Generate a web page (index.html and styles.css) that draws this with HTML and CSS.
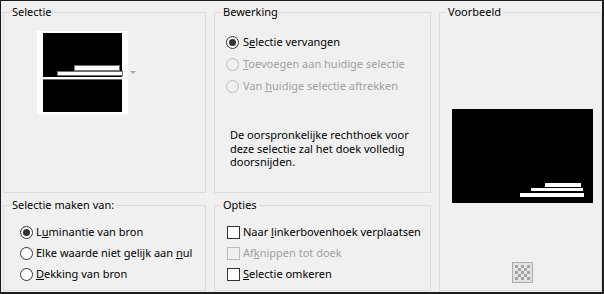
FILE: index.html
```html
<!DOCTYPE html>
<html lang="nl">
<head>
    <meta charset="UTF-8">
    <meta name="viewport" content="width=device-width, initial-scale=1.0">
    <title>Selectie uit masker</title>
    <link rel="stylesheet" href="styles.css">
</head>
<body>
    <div class="dialog">
        <fieldset class="group selectie">
            <legend>Selectie</legend>
            <div class="thumb-row">
                <svg class="thumb" width="91" height="83" viewBox="0 0 91 83">
                    <rect x="0" y="0" width="91" height="83" fill="#fff"/>
                    <rect x="6" y="2" width="79" height="79" fill="#000"/>
                    <rect x="37.5" y="34.5" width="45" height="5" fill="#fff" stroke="#707070"/>
                    <rect x="20.5" y="40.5" width="65" height="4" fill="#fff" stroke="#707070"/>
                    <rect x="6" y="46" width="79" height="2" fill="#fff"/>
                    <rect x="6" y="48" width="79" height="1" fill="#6a6a6a"/>
                </svg>
                <span class="dropdown-arrow"></span>
            </div>
        </fieldset>

        <fieldset class="group bewerking">
            <legend>Bewerking</legend>
            <div class="options">
                <label class="option"><input type="radio" name="mode" checked><span>S<u>e</u>lectie vervangen</span></label>
                <label class="option"><input type="radio" name="mode" disabled><span><u>T</u>oevoegen aan huidige selectie</span></label>
                <label class="option"><input type="radio" name="mode" disabled><span>Van <u>h</u>uidige selectie aftrekken</span></label>
            </div>
            <p class="note">De oorspronkelijke rechthoek voor<br>deze selectie zal het doek volledig<br>doorsnijden.</p>
        </fieldset>

        <fieldset class="group voorbeeld">
            <legend>Voorbeeld</legend>
            <svg class="preview" width="141" height="94" viewBox="0 0 141 94">
                <rect width="141" height="94" fill="#000"/>
                <rect x="93" y="74" width="36" height="4" fill="#fff"/>
                <rect x="79" y="79" width="52" height="3" fill="#fff"/>
                <rect x="68" y="84" width="64" height="4" fill="#fff"/>
            </svg>
            <button class="checker-btn" type="button">
                <svg width="15" height="15" viewBox="0 0 15 15">
                    <rect width="15" height="15" fill="#e6e6e6"/>
                    <path d="M0 0h3v3H0zM6 0h3v3H6zM12 0h3v3h-3zM3 3h3v3H3zM9 3h3v3H9zM0 6h3v3H0zM6 6h3v3H6zM12 6h3v3h-3zM3 9h3v3H3zM9 9h3v3H9zM0 12h3v3H0zM6 12h3v3H6zM12 12h3v3h-3z" fill="#a4a4a4"/>
                </svg>
            </button>
        </fieldset>

        <fieldset class="group bron">
            <legend>Selectie maken van:</legend>
            <div class="options tight">
                <label class="option"><input type="radio" name="bron" checked><span>L<u>u</u>minantie van bron</span></label>
                <label class="option"><input type="radio" name="bron"><span>Elke waarde niet gelijk aan <u>n</u>ul</span></label>
                <label class="option"><input type="radio" name="bron"><span><u>D</u>ekking van bron</span></label>
            </div>
        </fieldset>

        <fieldset class="group opties">
            <legend>Opties</legend>
            <div class="options tight">
                <label class="option"><input type="checkbox"><span>Naar <u>l</u>inkerbovenhoek verplaatsen</span></label>
                <label class="option"><input type="checkbox" disabled><span>Af<u>k</u>nippen tot doek</span></label>
                <label class="option"><input type="checkbox"><span><u>S</u>electie omkeren</span></label>
            </div>
        </fieldset>
    </div>
</body>
</html>
```

FILE: styles.css
```css
body {
    margin: 0;
    font-family: "Noto Sans", Arial, sans-serif;
    font-size: 11px;
    line-height: 16px;
    color: #000;
    background-color: #f0f0f0;
}
.dialog {
    width: 604px;
    height: 294px;
    box-sizing: border-box;
    border-style: solid;
    border-color: #1c1c1c;
    border-width: 1px 2px 2px 1px;
    padding: 3px 0 1px 2px;
    background-color: #f0f0f0;
    display: grid;
    grid-template-columns: 203px 217px 163px;
    grid-template-rows: 189px 94px;
    column-gap: 8px;
    row-gap: 4px;
    grid-template-areas:
        "selectie bewerking voorbeeld"
        "bron opties voorbeeld";
}
.group {
    margin: 0;
    padding: 0;
    min-width: 0;
    border: 1px solid #dcdcdc;
}
.group legend {
    margin-left: 6px;
    padding: 0 2px;
    line-height: 16px;
}
.selectie { grid-area: selectie; }
.bewerking { grid-area: bewerking; }
.voorbeeld { grid-area: voorbeeld; }
.bron { grid-area: bron; }
.opties { grid-area: opties; }

.thumb-row {
    display: flex;
    align-items: center;
    gap: 2px;
    padding: 11px 0 0 33px;
}
.thumb {
    display: block;
}
.dropdown-arrow {
    width: 0;
    height: 0;
    border-left: 3px solid transparent;
    border-right: 3px solid transparent;
    border-top: 3px solid #a8a8a8;
}

.options {
    display: flex;
    flex-direction: column;
    gap: 6px;
    padding: 14px 0 0 11px;
}
.options.tight {
    gap: 5px;
    padding: 11px 0 0 12px;
}
.bron .options.tight {
    padding-left: 16px;
}
.option {
    display: flex;
    align-items: center;
    gap: 4px;
    height: 16px;
    white-space: nowrap;
}
.option input {
    appearance: none;
    -webkit-appearance: none;
    margin: 0;
    width: 13px;
    height: 13px;
    flex: none;
    box-sizing: border-box;
    border: 1px solid #333;
    background-color: #fff;
}
.option input[type="radio"] {
    border-radius: 50%;
    display: grid;
    place-items: center;
}
.option input[type="radio"]:checked::after {
    content: "";
    width: 7px;
    height: 7px;
    border-radius: 50%;
    background-color: #333;
}
.option input:disabled {
    border-color: #bcbcbc;
    background-color: #f0f0f0;
}
.option input:disabled + span {
    color: #a0a0a0;
}
.opties .option {
    gap: 3px;
}
.bron .option {
    gap: 3px;
}

.note {
    margin: 34px 0 0 15px;
    line-height: 13.5px;
}

.preview {
    display: block;
    margin: 89px 0 0 12px;
}
.checker-btn {
    display: flex;
    align-items: center;
    justify-content: center;
    width: 21px;
    height: 21px;
    margin: 59px 0 0 72px;
    padding: 0;
    border: 1px solid #adadad;
    background-color: #e1e1e1;
}
```
